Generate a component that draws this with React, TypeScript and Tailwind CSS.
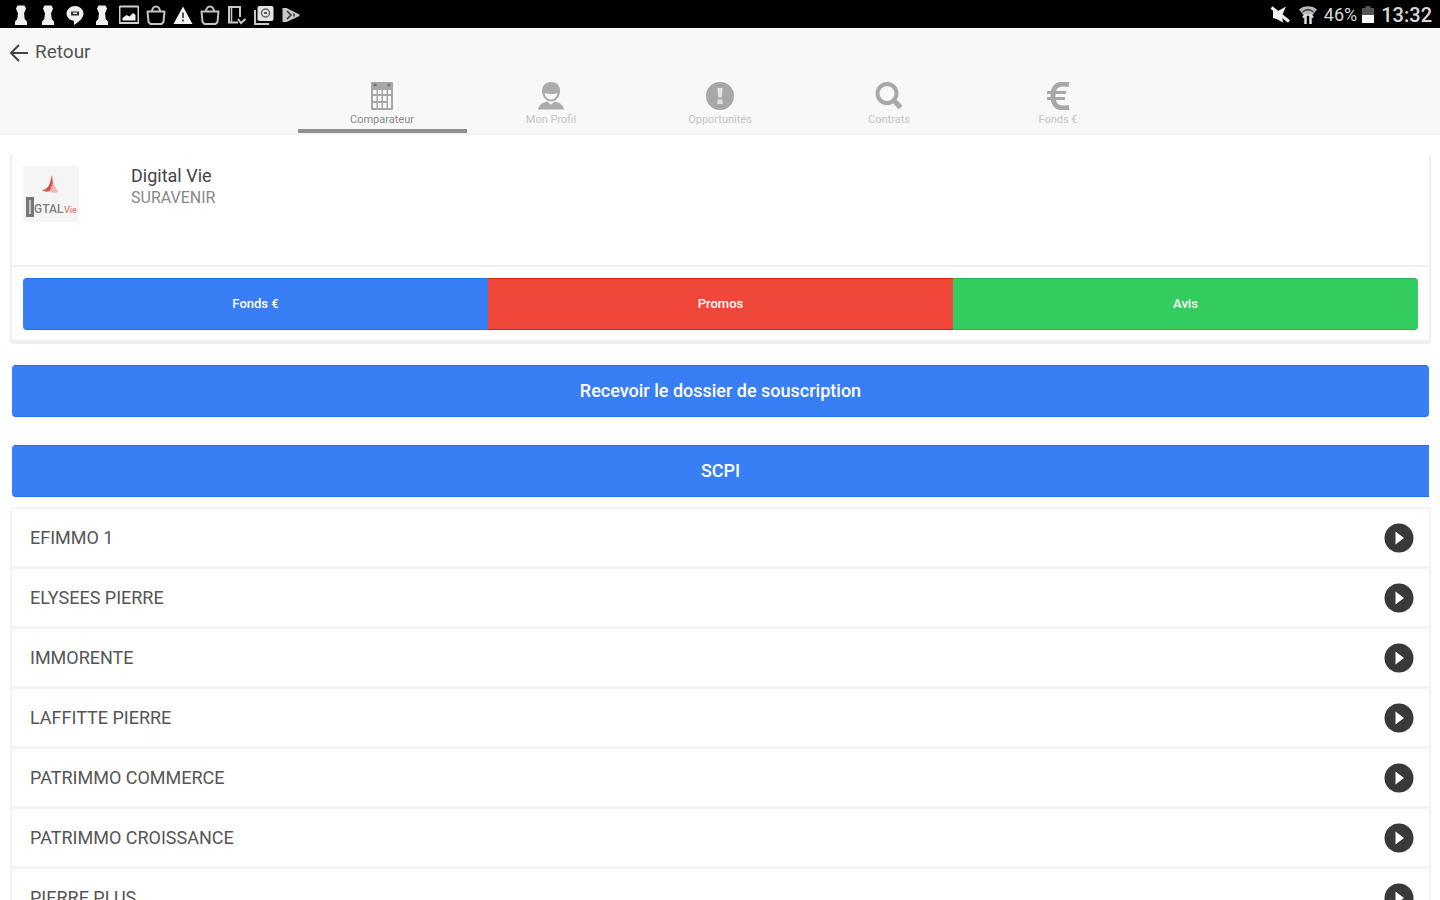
import React from 'react';

interface TabItem {
  label: string;
  icon: React.ReactNode;
}

const FUNDS = [
  'EFIMMO 1',
  'ELYSEES PIERRE',
  'IMMORENTE',
  'LAFFITTE PIERRE',
  'PATRIMMO COMMERCE',
  'PATRIMMO CROISSANCE',
  'PIERRE PLUS',
];

const KeyholeIcon = () => (
  <svg viewBox="0 0 20 20" className="w-5 h-5" fill="#f0f0f0">
    <path d="M6.5 0.5h7l1.5 3-1.5 4H13l.7 6.5 2.300 2.500V20H4v-3.500L6.300 14 7 7.500h-.5L5 3.500z" />
  </svg>
);

const ChatIcon = () => (
  <svg viewBox="0 0 20 20" className="w-5 h-5">
    <path d="M10 1a8.500 7.500 0 0 0-8.500 7.500c0 4 3.500 7 7.500 7.300V20c4-2.500 9.500-6.500 9.500-11.500A8.500 7.500 0 0 0 10 1z" fill="#f0f0f0" />
    <path d="M6 6.500h8v4H6z" fill="#333" />
    <path d="M8 7.500h4v1.500H8z" fill="#ddd" />
  </svg>
);

const PictureIcon = () => (
  <svg viewBox="0 0 20 20" className="w-5 h-5">
    <rect x="0.5" y="1.500" width="19" height="16.500" rx="1" fill="none" stroke="#d0d0d0" strokeWidth="2" />
    <path d="M3.500 15.500v-2.500l4-3 3 1.500 3.500-3.500 2.500 2v5.500z" fill="#f4f4f4" />
  </svg>
);

const BagIcon = () => (
  <svg viewBox="0 0 20 20" className="w-5 h-5" fill="none" stroke="#c4c4c4" strokeWidth="2">
    <path d="M1.500 6.500h17L17.500 17l-2 2h-11l-2-2z" strokeLinejoin="round" />
    <path d="M6 7c0-3 1.500-5.500 4-5.500S14 4 14 7" />
  </svg>
);

const WarningIcon = () => (
  <svg viewBox="0 0 20 20" className="w-5 h-5">
    <path d="M10 1.500L19.500 19H.5z" fill="#f4f4f4" />
    <path d="M9 7.500h2v5.500H9zM9 14.500h2v2H9z" fill="#555" />
  </svg>
);

const DeviceIcon = () => (
  <svg viewBox="0 0 20 20" className="w-5 h-5" fill="none" stroke="#c8c8c8" strokeWidth="2">
    <path d="M13 12V2H2v15.500h9" />
    <path d="M4.500 2v15" strokeWidth="1.500" />
    <path d="M11 14l3 4 4.500-4" />
  </svg>
);

const CardsIcon = () => (
  <svg viewBox="0 0 20 20" className="w-5 h-5">
    <path d="M1 5v14h14" fill="none" stroke="#c8c8c8" strokeWidth="2" />
    <rect x="3.500" y="1" width="16" height="15" rx="2" fill="#e4e4e4" />
    <circle cx="11.500" cy="8" r="4" fill="none" stroke="#666" strokeWidth="1.500" />
    <path d="M10 8h3" stroke="#555" strokeWidth="2" />
  </svg>
);

const PlayStoreIcon = () => (
  <svg viewBox="0 0 20 20" className="w-5 h-5">
    <path d="M1.500 3h4l13 6.500v1.500l-13 6h-4z" fill="#c8c8c8" />
    <path d="M6 6l4 4-4 4M13 8.500v3" fill="none" stroke="#333" strokeWidth="1.500" />
  </svg>
);

const MutedIcon = () => (
  <svg viewBox="0 0 20 20" className="w-5 h-5">
    <path d="M3 6h5l8-4.500-4 9 1 7L6.500 14 3 13z" fill="#f0f0f0" />
    <path d="M1.500 2.500l17.500 14" stroke="#f0f0f0" strokeWidth="3" />
  </svg>
);

const WifiIcon = () => (
  <svg viewBox="0 0 20 20" className="w-5 h-5">
    <path d="M1 4.500C5.500 0 14.500 0 19 4.500L13.500 11h-7z" fill="#b8b8b8" />
    <path d="M4.500 7c3.500-3 7.500-3 11 0" fill="none" stroke="#444" strokeWidth="1.500" />
    <path d="M7.500 9v10M12.500 9v10" stroke="#e0e0e0" strokeWidth="2.500" />
    <path d="M5 12.500l2.500-3M15 12.500l-2.500-3" stroke="#e0e0e0" strokeWidth="2" />
  </svg>
);

const BatteryIcon = () => (
  <svg viewBox="0 0 14 18" className="w-3.5 h-4.5">
    <path d="M4.500 0h5v2H13v7H1V2h3.500z" fill="#555" />
    <path d="M1 9h12v8H1z" fill="#fff" />
  </svg>
);

const CalculatorIcon = () => (
  <svg viewBox="0 0 28 28" className="w-7 h-7">
    <rect x="3" y="0" width="22" height="28" rx="1" fill="#a6a6a6" />
    <path d="M5.500 3h3M19.500 3h3" stroke="#777" strokeWidth="2.500" />
    <g fill="#f8f8f8">
      <rect x="5" y="8" width="3.500" height="4" />
      <rect x="10" y="8" width="3.500" height="4" />
      <rect x="15" y="8" width="3.500" height="4" />
      <rect x="20" y="8" width="3" height="4" />
      <rect x="5" y="14" width="3.500" height="5" />
      <rect x="10" y="14" width="3.500" height="5" />
      <rect x="15" y="14" width="3.500" height="5" />
      <rect x="20" y="14" width="3" height="12" />
      <rect x="5" y="21" width="3.500" height="5" />
      <rect x="10" y="21" width="3.500" height="5" />
      <rect x="15" y="21" width="3.500" height="5" />
    </g>
  </svg>
);

const ProfileIcon = () => (
  <svg viewBox="0 0 28 28" className="w-7 h-7">
    <path d="M14 0C8 0 5 4 5 9c0 5.500 4 10.500 9 10.500s9-5 9-10.500c0-5-3-9-9-9z" fill="#acacac" />
    <path d="M7.500 11c3 1.500 10 1.500 13 0-.5 4-3.500 6.500-6.500 6.500s-6-2.500-6.500-6.500z" fill="#f8f8f8" />
    <path d="M1 27.500c1-5 4-6.500 9-8l4 3 4-3c5 1.500 8 3 9 8z" fill="#acacac" />
  </svg>
);

const AlertIcon = () => (
  <svg viewBox="0 0 28 28" className="w-7 h-7">
    <circle cx="14" cy="14" r="14" fill="#a8a8a8" />
    <path d="M11.500 6h5l-.7 9.500h-3.600zM11.500 17.500h5v4.500h-5z" fill="#e4e4e4" />
  </svg>
);

const SearchIcon = () => (
  <svg viewBox="0 0 28 28" className="w-7 h-7" fill="none" stroke="#a8a8a8">
    <circle cx="12" cy="11.500" r="9.500" strokeWidth="4" />
    <path d="M18.500 18l7 7.500" strokeWidth="5" />
  </svg>
);

const EuroIcon = () => (
  <svg viewBox="0 0 28 28" className="w-7 h-7" fill="none" stroke="#a8a8a8">
    <path d="M25 2.500C14 .5 9 4 9 14s5 13.500 16 11.500" strokeWidth="5" />
    <path d="M3 10.500h19M3 16.500h18" strokeWidth="3" />
  </svg>
);

const PlayCircleIcon = () => (
  <svg viewBox="0 0 30 30" className="w-[30px] h-[30px]">
    <circle cx="15" cy="15" r="14.500" fill="#393939" />
    <path d="M11.500 8.500l8.500 6.500-8.500 6.500z" fill="#fff" />
  </svg>
);

const BrandLogo = () => (
  <svg viewBox="0 0 56 56" className="w-14 h-14" role="img" aria-label="Digital Vie">
    <rect width="56" height="56" fill="#f5f5f5" />
    <path d="M29 9l1 9-3 7c-3 1-5 1-8-.5 4-1 7-4 8-8z" fill="#d9534f" />
    <path d="M30 17l5 9c-3 1.500-6 1-8-1z" fill="#f0b4b4" />
    <rect x="3" y="31" width="8" height="20" fill="#777" />
    <path d="M7 34v14" stroke="#ddd" strokeWidth="1.500" />
    <text x="11" y="47" fontFamily="Roboto, sans-serif" fontSize="12" fontWeight="500" fill="#808080">GTAL</text>
    <text x="41" y="47" fontFamily="Roboto, sans-serif" fontSize="9" fontWeight="500" fill="#e08080">Vie</text>
  </svg>
);

const TABS: TabItem[] = [
  { label: 'Comparateur', icon: <CalculatorIcon /> },
  { label: 'Mon Profil', icon: <ProfileIcon /> },
  { label: 'Opportunités', icon: <AlertIcon /> },
  { label: 'Contrats', icon: <SearchIcon /> },
  { label: 'Fonds €', icon: <EuroIcon /> },
];

const StatusBar = () => (
  <div className="h-7 shrink-0 bg-black flex items-center justify-between pl-[11px] pr-2 pt-0.5">
    <div className="flex items-center gap-[7px]">
      <KeyholeIcon />
      <KeyholeIcon />
      <ChatIcon />
      <KeyholeIcon />
      <PictureIcon />
      <BagIcon />
      <WarningIcon />
      <BagIcon />
      <DeviceIcon />
      <CardsIcon />
      <PlayStoreIcon />
    </div>
    <div className="flex items-center text-[#d8d8d8]">
      <MutedIcon />
      <div className="ml-2 mr-1.5"><WifiIcon /></div>
      <span className="text-lg leading-7">46%</span>
      <div className="ml-1 mr-1.5"><BatteryIcon /></div>
      <span className="text-xl leading-7 font-medium">13:32</span>
    </div>
  </div>
);

const Header = () => (
  <header className="shrink-0 bg-[#f8f8f8] border-b-2 border-[#f3f3f3]">
    <button type="button" className="h-12 pl-[9px] flex items-center gap-1.5 text-[19px] text-[#555]">
      <svg viewBox="0 0 20 20" className="w-5 h-5" fill="none" stroke="#444" strokeWidth="2">
        <path d="M19 11H2M10 3l-8 8 8 8" />
      </svg>
      Retour
    </button>
    <nav className="flex justify-center">
      {TABS.map((tab, i) => (
        <button
          key={tab.label}
          type="button"
          className={`w-[169px] h-[57px] pt-1.5 flex flex-col items-center border-b-4 ${i === 0 ? 'border-[#8f8f8f] text-[#8a8a8a]' : 'border-transparent text-[#c4c4c4]'}`}
        >
          {tab.icon}
          <span className="text-[11px] leading-4 mt-0.5">{tab.label}</span>
        </button>
      ))}
    </nav>
  </header>
);

const App: React.FC = () => {
  return (
    <div className="h-screen flex flex-col overflow-hidden bg-white font-['Roboto',sans-serif]">
      <StatusBar />
      <Header />
      <main className="flex-1 min-h-0 overflow-hidden pl-[10px] pr-[9px] pt-5">
        <section className="border-x-2 border-b-4 border-[#efefef] rounded-b-sm">
          <div className="h-[112px] px-[11px] pt-[11px] flex gap-[52px] border-b-2 border-[#efefef]">
            <BrandLogo />
            <div>
              <h2 className="text-lg leading-5 text-[#444]">Digital Vie</h2>
              <p className="text-base leading-6 text-[#888]">SURAVENIR</p>
            </div>
          </div>
          <div className="px-[11px] pt-[11px] pb-[10px] flex text-[13px] font-medium text-white">
            <button type="button" className="flex-1 h-[52px] rounded-l-sm bg-[#387ef5] border-y border-[#1a6fee]">Fonds €</button>
            <button type="button" className="flex-1 h-[52px] bg-[#ef473a] border-y border-[#e42012]">Promos</button>
            <button type="button" className="flex-1 h-[52px] rounded-r-sm bg-[#33cd5f] border-y border-[#28b54f]">Avis</button>
          </div>
        </section>

        <div className="px-0.5 mt-[21px] flex flex-col gap-7 text-lg font-medium text-white">
          <button type="button" className="h-[52px] rounded-sm bg-[#387ef5] border-y border-[#1a6fee]">
            Recevoir le dossier de souscription
          </button>
          <button type="button" className="h-[52px] rounded-l-sm bg-[#387ef5] border-y border-[#1a6fee]">
            SCPI
          </button>
        </div>

        <ul className="mt-[10px] border-2 border-[#f3f3f3] rounded-sm">
          {FUNDS.map((name) => (
            <li key={name} className="border-b-3 border-[#f3f3f3]">
              <button type="button" className="w-full h-[57px] pl-[18px] pr-[15px] flex items-center justify-between text-lg text-[#555]">
                {name}
                <PlayCircleIcon />
              </button>
            </li>
          ))}
        </ul>
      </main>
    </div>
  );
};

export default App;
